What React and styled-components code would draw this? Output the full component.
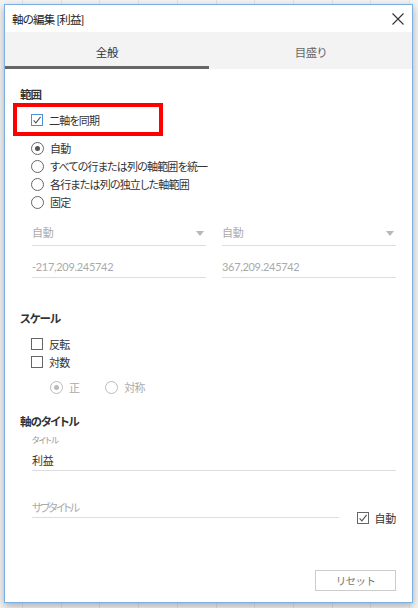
import React from 'react';
import styled, { createGlobalStyle } from 'styled-components';

const Global = createGlobalStyle`
  html, body { margin: 0; padding: 0; }
  body {
    background: #f4f4f4;
    font-family: Lato, "Noto Sans CJK JP", "Noto Sans", sans-serif;
    font-size: 11px;
    letter-spacing: -0.3px;
    color: #333;
    font-feature-settings: "palt" 1;
  }
`;

const Page = styled.div`
  width: 418px;
  height: 608px;
  box-sizing: border-box;
  padding: 4px 0 0 4px;
  overflow: hidden;
  background-color: #f4f4f4;
  background-image: repeating-linear-gradient(90deg, transparent 0 22px, #e4e4e4 22px 23px, transparent 23px 38.7px);
`;

const Dialog = styled.div`
  width: 409px;
  height: 599px;
  box-sizing: border-box;
  border: 1px solid #7ab0e4;
  background: #fff;
  box-shadow: 0 3px 8px rgba(0, 0, 0, 0.3);
  display: flex;
  flex-direction: column;
`;

const TitleBar = styled.div`
  height: 27px;
  flex: none;
  display: flex;
  align-items: center;
  justify-content: space-between;
  padding: 0 8px 0 7px;
  font-size: 11.5px;
  letter-spacing: -0.8px;
  color: #222;
`;

const CloseButton = styled.span`
  display: flex;
  width: 12px;
  height: 12px;
`;

const Tabs = styled.div`
  display: grid;
  grid-template-columns: 204px 1fr;
  height: 37px;
  flex: none;
  background: #f3f3f3;
`;

const Tab = styled.div`
  display: flex;
  align-items: center;
  justify-content: center;
  box-sizing: border-box;
  padding-top: 5px;
  border-bottom: 3px solid ${(p) => (p.$active ? '#666' : 'transparent')};
  color: ${(p) => (p.$active ? '#333' : '#666')};
  font-size: 11.5px;
`;

const Body = styled.div`
  flex: 1;
  display: flex;
  flex-direction: column;
  padding: 0 16px 0 15px;
`;

const SectionTitle = styled.div`
  font-weight: bold;
  line-height: 16px;
  font-size: 11.5px;
  letter-spacing: -1px;
  color: #333;
  margin-top: ${(p) => p.$mt}px;
`;

const Highlight = styled.div`
  margin-left: -7px;
  width: 150px;
  height: 33px;
  box-sizing: border-box;
  border: 4px solid #ff0000;
  display: flex;
  align-items: center;
  padding-left: 14px;
`;

const Group = styled.div`
  display: flex;
  flex-direction: column;
  margin-top: ${(p) => p.$mt || 0}px;
`;

const OptionRow = styled.label`
  display: flex;
  align-items: center;
  height: 18px;
  white-space: nowrap;
  letter-spacing: -0.8px;
  padding-left: ${(p) => (p.$inset === undefined ? 11 : p.$inset)}px;
  color: ${(p) => (p.$disabled ? '#aaa' : '#333')};
`;

const ControlSlot = styled.span`
  display: flex;
  margin-right: 6px;
`;

const Box = styled.span`
  width: 12px;
  height: 12px;
  box-sizing: border-box;
  border: 1px solid ${(p) => (p.$focus ? '#4a90d9' : '#666')};
  display: flex;
  align-items: center;
  justify-content: center;
  flex: none;
  background: #fff;
`;

const Circle = styled.span`
  width: 13px;
  height: 13px;
  box-sizing: border-box;
  border-radius: 50%;
  border: 1px solid ${(p) => (p.$disabled ? '#bbb' : '#666')};
  display: flex;
  align-items: center;
  justify-content: center;
  flex: none;
`;

const Dot = styled.span`
  width: 5px;
  height: 5px;
  border-radius: 50%;
  background: ${(p) => (p.$disabled ? '#bbb' : '#555')};
`;

const SubRadios = styled.div`
  display: flex;
  align-items: center;
  margin-top: 7px;
  padding-left: 30px;
  gap: 26px;
`;

const FieldGrid = styled.div`
  display: grid;
  grid-template-columns: 174px 174px;
  column-gap: 16px;
  row-gap: 13px;
  margin: 14px 0 0 12px;
`;

const Field = styled.div`
  display: flex;
  align-items: center;
  justify-content: space-between;
  line-height: 16px;
  color: ${(p) => (p.$muted ? '#aaa' : '#333')};
  border-bottom: 1px solid #ddd;
  padding: 0 2px ${(p) => p.$pb}px 0;
  width: ${(p) => (p.$w ? `${p.$w}px` : 'auto')};
  margin-left: ${(p) => p.$ml || 0}px;
  margin-top: ${(p) => p.$mt || 0}px;
`;

const Placeholder = styled.span`
  letter-spacing: -2px;
`;

const SmallLabel = styled.div`
  font-size: 8.5px;
  letter-spacing: -0.8px;
  line-height: 12px;
  color: #999;
  margin: 4px 0 0 12px;
`;

const SubtitleRow = styled.div`
  display: flex;
  align-items: flex-start;
  margin-top: 29px;
`;

const AutoCheck = styled.label`
  display: flex;
  align-items: center;
  gap: 6px;
  height: 12px;
  white-space: nowrap;
  flex: none;
  margin: 12px 0 0 18px;
  color: #333;
`;

const ResetButton = styled.button`
  margin-top: auto;
  margin-bottom: 11px;
  align-self: flex-end;
  width: 81px;
  height: 21px;
  box-sizing: border-box;
  border: 1px solid #ccc;
  background: #fff;
  color: #777;
  font-family: inherit;
  font-size: 10.5px;
  letter-spacing: -0.6px;
  padding: 0;
`;

const Check = ({ color = '#555' }) => (
  <svg width="10" height="10" viewBox="0 0 10 10">
    <path d="M1.6 5.4 L3.9 7.8 L8.6 1.8" fill="none" stroke={color} strokeWidth="1.1" />
  </svg>
);

const Checkbox = ({ checked, focus }) => (
  <Box $focus={focus}>{checked && <Check />}</Box>
);

const Radio = ({ checked, disabled }) => (
  <Circle $disabled={disabled}>{checked && <Dot $disabled={disabled} />}</Circle>
);

const Arrow = () => (
  <svg width="8" height="5" viewBox="0 0 8 5">
    <polygon points="0,0 8,0 4,5" fill="#b8b8b8" />
  </svg>
);

const Option = ({ control, children, ...rest }) => (
  <OptionRow {...rest}>
    <ControlSlot>{control}</ControlSlot>
    {children}
  </OptionRow>
);

export default function App() {
  return (
    <>
      <Global />
      <Page>
        <Dialog>
          <TitleBar>
            <span>軸の編集 [利益]</span>
            <CloseButton>
              <svg width="12" height="12" viewBox="0 0 12 12">
                <path d="M0.5 0.5 L11.5 11.5 M11.5 0.5 L0.5 11.5" stroke="#333" strokeWidth="1.1" />
              </svg>
            </CloseButton>
          </TitleBar>
          <Tabs>
            <Tab $active>全般</Tab>
            <Tab>目盛り</Tab>
          </Tabs>
          <Body>
            <SectionTitle $mt={18}>範囲</SectionTitle>
            <Highlight>
              <Option $inset={0} control={<Checkbox checked focus />}>二軸を同期</Option>
            </Highlight>
            <Group $mt={3}>
              <Option control={<Radio checked />}>自動</Option>
              <Option control={<Radio />}>すべての行または列の軸範囲を統一</Option>
              <Option control={<Radio />}>各行または列の独立した軸範囲</Option>
              <Option control={<Radio />}>固定</Option>
            </Group>
            <FieldGrid>
              <Field $muted $pb={4}>自動<Arrow /></Field>
              <Field $muted $pb={4}>自動<Arrow /></Field>
              <Field $muted $pb={2}>-217,209.245742</Field>
              <Field $muted $pb={2}>367,209.245742</Field>
            </FieldGrid>

            <SectionTitle $mt={33}>スケール</SectionTitle>
            <Group $mt={8}>
              <Option control={<Checkbox />}>反転</Option>
              <Option control={<Checkbox />}>対数</Option>
            </Group>
            <SubRadios>
              <Option $inset={0} $disabled control={<Radio checked disabled />}>正</Option>
              <Option $inset={0} $disabled control={<Radio disabled />}>対称</Option>
            </SubRadios>

            <SectionTitle $mt={18}>軸のタイトル</SectionTitle>
            <SmallLabel>タイトル</SmallLabel>
            <Field $pb={1} $ml={12} $mt={7}>利益</Field>
            <SubtitleRow>
              <Field $muted $pb={1} $ml={12} $w={307}>
                <Placeholder>サブタイトル</Placeholder>
              </Field>
              <AutoCheck>
                <Checkbox checked />
                自動
              </AutoCheck>
            </SubtitleRow>
            <ResetButton>リセット</ResetButton>
          </Body>
        </Dialog>
      </Page>
    </>
  );
}
